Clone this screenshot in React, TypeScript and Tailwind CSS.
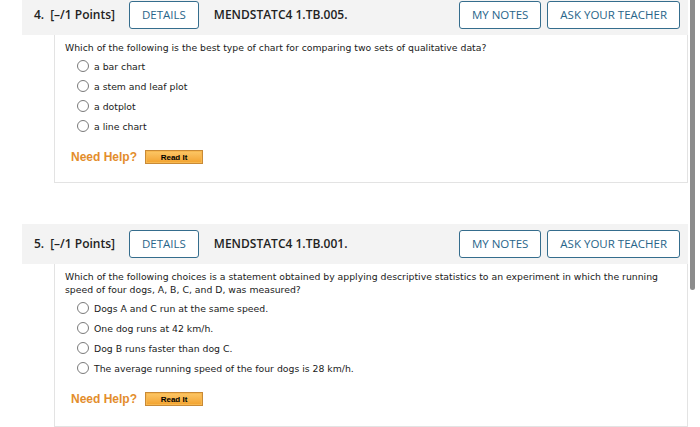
import React from "react";

const Radio = () => (
  <span className="inline-block h-[12px] w-[12px] shrink-0 rounded-full border border-[#7a7a7a] bg-white" />
);

const HeaderButton = ({ children }: { children: React.ReactNode }) => (
  <div className="flex h-[28px] items-center rounded-[3px] border border-[#356d8d] bg-white px-[12px] text-[11.5px] font-medium text-[#28658a]">
    {children}
  </div>
);

const Header = ({ num, code }: { num: string; code: string }) => (
  <div className="flex h-[40px] items-center bg-[#f3f3f3] pl-[12px] pr-[8px] font-['Open_Sans',sans-serif]">
    <div className="text-[12px] font-semibold text-[#222]">
      {num}
      <span className="ml-[6px]">[–/1 Points]</span>
    </div>
    <div className="ml-[14px]">
      <HeaderButton>DETAILS</HeaderButton>
    </div>
    <div className="ml-[15px] text-[12px] font-semibold text-[#222]">{code}</div>
    <div className="ml-auto flex gap-[6px]">
      <HeaderButton>MY NOTES</HeaderButton>
      <HeaderButton>ASK YOUR TEACHER</HeaderButton>
    </div>
  </div>
);

const NeedHelp = () => (
  <div className="ml-[6px] mt-[14px] flex items-center gap-[8px] font-['Liberation_Sans',sans-serif]">
    <span className="text-[12px] font-bold text-[#e38d2c]">Need Help?</span>
    <span className="flex h-[14px] w-[58px] items-center justify-center border border-[#c98a36] bg-gradient-to-b from-[#fcc766] to-[#f2a22c] text-[8px] font-bold text-black shadow-[inset_0_0_0_1px_#f7b850]">
      Read It
    </span>
  </div>
);

const Options = ({ items }: { items: string[] }) => (
  <div className="flex flex-col">
    {items.map((t) => (
      <div key={t} className="flex h-[20px] items-center pl-[12px]">
        <Radio />
        <span className="ml-[5px]">{t}</span>
      </div>
    ))}
  </div>
);

export default function App() {
  return (
    <div className="relative h-[427px] w-[700px] overflow-hidden bg-white">
      <div className="-mt-[5px] pl-[22px] pr-[12px]">
        <Header num="4." code="MENDSTATC4 1.TB.005." />
        <div className="ml-[32px] border-x border-b border-[#e3e3e3] pb-[18px] pl-[10px] pt-[6px] font-['DejaVu_Sans',sans-serif] text-[9.3px] leading-[13px] text-[#1a1a1a]">
          <p className="mb-[2px]">
            Which of the following is the best type of chart for comparing two sets of qualitative data?
          </p>
          <Options items={["a bar chart", "a stem and leaf plot", "a dotplot", "a line chart"]} />
          <NeedHelp />
        </div>

        <div className="mt-[41px]">
          <Header num="5." code="MENDSTATC4 1.TB.001." />
          <div className="ml-[32px] border-x border-b border-[#e3e3e3] pb-[20px] pl-[10px] pr-[20px] pt-[6px] font-['DejaVu_Sans',sans-serif] text-[9.3px] leading-[13px] text-[#1a1a1a]">
            <p className="mb-[2px]">
              Which of the following choices is a statement obtained by applying descriptive statistics to an experiment in which the running speed of four dogs, A, B, C, and D, was measured?
            </p>
            <Options
              items={[
                "Dogs A and C run at the same speed.",
                "One dog runs at 42 km/h.",
                "Dog B runs faster than dog C.",
                "The average running speed of the four dogs is 28 km/h.",
              ]}
            />
            <NeedHelp />
          </div>
        </div>
      </div>
      <div className="absolute left-[690px] top-0 h-[290px] w-[5px] rounded-b-full bg-[#8c8c8c]" />
    </div>
  );
}
